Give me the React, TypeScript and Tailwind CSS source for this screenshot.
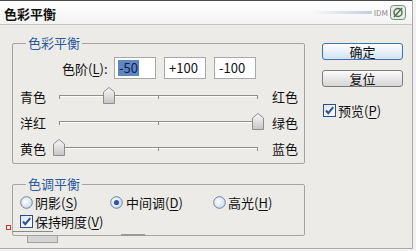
import React from 'react';

const FONT = { fontFamily: '"Noto Sans CJK SC", "Noto Sans", sans-serif' };

const Key = ({ k }: { k: string }) => (
  <span>
    (<span className="underline underline-offset-2">{k}</span>)
  </span>
);

const CheckBox = () => (
  <svg width="13" height="13" viewBox="0 0 13 13" className="shrink-0">
    <defs>
      <linearGradient id="cbg" x1="0" y1="0" x2="1" y2="1">
        <stop offset="0" stopColor="#dfe3ea" />
        <stop offset="1" stopColor="#ffffff" />
      </linearGradient>
    </defs>
    <rect x="0.5" y="0.5" width="12" height="12" fill="url(#cbg)" stroke="#2a4f85" />
    <path d="M3 6.5 L5.3 9.2 L10.2 3.2" fill="none" stroke="#2b4f9c" strokeWidth="2" />
  </svg>
);

const Radio = ({ on }: { on?: boolean }) => (
  <svg width="13" height="13" viewBox="0 0 13 13" className="shrink-0">
    <defs>
      <radialGradient id="rg" cx="0.4" cy="0.4" r="0.7">
        <stop offset="0" stopColor="#ffffff" />
        <stop offset="1" stopColor="#c9d4e2" />
      </radialGradient>
    </defs>
    <circle cx="6.5" cy="6.5" r="5.8" fill="url(#rg)" stroke="#6a84a8" />
    {on && <circle cx="6.5" cy="6.5" r="2.6" fill="#2d5aa3" />}
  </svg>
);

const Thumb = () => (
  <svg width="12" height="17" viewBox="0 0 12 17">
    <defs>
      <linearGradient id="tg" x1="0" y1="0" x2="0" y2="1">
        <stop offset="0" stopColor="#fbfbfb" />
        <stop offset="1" stopColor="#c4c4c4" />
      </linearGradient>
    </defs>
    <path d="M0.5 5 L6 0.5 L11.5 5 L11.5 16.5 L0.5 16.5 Z" fill="url(#tg)" stroke="#8d8d8d" />
  </svg>
);

const sliders = [
  { left: '青色', right: '红色', value: -50 },
  { left: '洋红', right: '绿色', value: 100 },
  { left: '黄色', right: '蓝色', value: -100 },
];

const SliderRow = ({ left, right, value }: { left: string; right: string; value: number }) => {
  const pos = ((value + 100) / 200) * 199;
  return (
    <div className="flex h-[26px] items-center pl-[7px]">
      <span className="w-[39px] text-[13px] leading-none">{left}</span>
      <div className="relative h-[2px] w-[199px] border-t border-[#8e8e8e] border-b border-b-white">
        <div className="absolute left-0 top-0 h-[3px] w-px bg-[#8e8e8e]" />
        <div className="absolute left-[99px] top-0 h-[3px] w-px bg-[#8e8e8e]" />
        <div className="absolute right-0 top-0 h-[3px] w-px bg-[#8e8e8e]" />
        <div className="absolute top-[-9px]" style={{ left: pos - 6 }}>
          <Thumb />
        </div>
      </div>
      <span className="ml-[14px] text-[13px] leading-none">{right}</span>
    </div>
  );
};

const Group = ({ title, className, children }: { title: string; className: string; children: React.ReactNode }) => (
  <div className={`relative w-[293px] rounded-[2px] border border-[#a4a4a4] ${className}`}>
    <span className="absolute left-[13px] top-[-9px] bg-[#ECEBE8] px-[2px] text-[13px] leading-[16px] text-[#2a5a9c]">
      {title}
    </span>
    {children}
  </div>
);

export default function App() {
  return (
    <div className="relative h-[251px] w-[416px] overflow-hidden bg-[#f2f2f2] text-[#111]" style={FONT}>
      <div className="flex h-[249px] w-[413px] flex-col border-r border-b border-[#a9a9a9] bg-[#ECEBE8]">
        <div className="flex h-[25px] shrink-0 items-center justify-between border-t border-[#4a4a4a] border-b border-b-[#c6c6c6] bg-linear-to-b from-white to-[#f3f3f3] pl-[4px] pr-[6px]">
          <span className="pt-[2px] text-[13px] font-bold leading-none">色彩平衡</span>
          <div className="flex items-center gap-[2px]">
            <div className="h-[3px] w-[60px] bg-linear-to-r from-transparent to-[#9fb3c8] opacity-60" />
            <span className="text-[8px] leading-none text-[#8a8a8a]">IDM</span>
            <svg width="16" height="15" viewBox="0 0 16 15">
              <rect x="0.5" y="0.5" width="15" height="14" rx="3" fill="#e8ede8" stroke="#7a8a7a" />
              <circle cx="8" cy="7.5" r="4" fill="none" stroke="#4f6f4f" strokeWidth="1.5" />
              <path d="M4 12 L12 3" stroke="#4f6f4f" strokeWidth="1.5" />
            </svg>
          </div>
        </div>

        <div className="flex flex-1">
          <div className="w-[305px] pl-[12px] pt-[18px]">
            <Group title="色彩平衡" className="h-[121px]">
              <div className="flex items-center pl-[49px] pt-[13px]">
                <span className="w-[52px] text-[13px] leading-none">
                  色阶<Key k="L" />:
                </span>
                <div className="flex gap-[8px]">
                  <div className="flex h-[22px] w-[42px] items-center border border-[#a8a8a8] bg-white pl-[3px] text-[13px]">
                    <span className="bg-[#5f87c4] px-[1px] leading-[16px] text-[#10204a]">-50</span>
                  </div>
                  <div className="flex h-[22px] w-[42px] items-center border border-[#a8a8a8] bg-white pl-[4px] text-[13px]">
                    +100
                  </div>
                  <div className="flex h-[22px] w-[42px] items-center border border-[#a8a8a8] bg-white pl-[4px] text-[13px]">
                    -100
                  </div>
                </div>
              </div>
              <div className="mt-[4px]">
                {sliders.map(s => (
                  <SliderRow key={s.left} {...s} />
                ))}
              </div>
            </Group>

            <Group title="色调平衡" className="mt-[20px] h-[52px]">
              <div className="flex h-[19px] items-center pl-[7px] pt-[8px] text-[13px] leading-none box-content">
                <div className="flex w-[90px] items-center gap-[2px]">
                  <Radio />
                  <span>
                    阴影<Key k="S" />
                  </span>
                </div>
                <div className="flex w-[103px] items-center gap-[3px]">
                  <Radio on />
                  <span>
                    中间调<Key k="D" />
                  </span>
                </div>
                <div className="flex items-center gap-[2px]">
                  <Radio />
                  <span>
                    高光<Key k="H" />
                  </span>
                </div>
              </div>
              <div className="flex h-[19px] items-center gap-[2px] pl-[7px] text-[13px] leading-none">
                <CheckBox />
                <span>
                  保持明度<Key k="V" />
                </span>
              </div>
            </Group>
          </div>

          <div className="flex flex-col pl-[17px] pt-[18px]">
            <button className="h-[17px] w-[81px] rounded-[3px] border border-[#3c74ac] bg-linear-to-b from-[#fdfeff] to-[#d3e2f2] text-[13px] leading-none">
              确定
            </button>
            <button className="mt-[10px] h-[17px] w-[81px] rounded-[3px] border border-[#7d7d7d] bg-linear-to-b from-[#fbfbfb] to-[#d6d6d6] text-[13px] leading-none">
              复位
            </button>
            <div className="mt-[17px] flex items-center gap-[2px] pl-[1px] text-[13px] leading-none">
              <CheckBox />
              <span>
                预览<Key k="P" />
              </span>
            </div>
          </div>
        </div>
      </div>

      <div className="absolute left-[6px] top-[225px] h-[5px] w-[5px] border border-[#c0392b]" />
      <div className="absolute left-[13px] top-[231px] h-px w-[40px] bg-[#8a8a8a]" />
      <div className="absolute left-[27px] top-[235px] h-[8px] w-[31px] border border-[#a0a0a0] bg-[#d4d4d4]" />
      <div className="absolute left-[121px] top-[234px] h-[2px] w-[24px] bg-[#9a9a9a]" />
    </div>
  );
}
